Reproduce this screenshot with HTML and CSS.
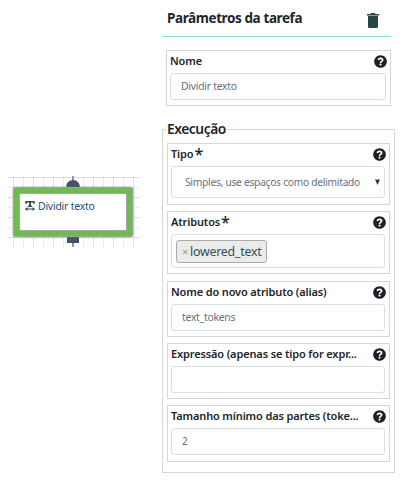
FILE: index.html
```html
<!DOCTYPE html>
<html lang="pt-BR">
<head>
<meta charset="utf-8">
<title>Parâmetros da tarefa</title>
<link rel="stylesheet" href="styles.css">
</head>
<body>
<svg class="defs" width="0" height="0">
  <symbol id="help" viewBox="0 0 512 512"><path fill="#1d2126" d="M504 256c0 137-111 248-248 248S8 393 8 256 119 8 256 8s248 111 248 248z"/><path fill="none" stroke="#fff" stroke-width="66" d="M166 197c14-42 43-65 88-65 50 0 86 27 86 68 0 53-80 50-80 102v10"/><circle cx="258" cy="378" r="43" fill="#fff"/></symbol>
</svg>
<main class="workspace">
  <section class="canvas">
    <svg class="ports" width="132" height="71" viewBox="0 0 132 71">
      <path d="M65 0v71" stroke="#8d949e" stroke-width="2"/>
      <circle cx="65" cy="11" r="7" fill="#445466"/>
      <path d="M59 61h12v6H59z" fill="#445466"/>
    </svg>
    <div class="node">
      <div class="node-body">
        <svg class="node-icon" width="10" height="10" viewBox="0 0 10 10" fill="#2d4a50"><path d="M.3 0h9.400v3H8.500L8.100 1.500H5.900v3.300h1.300V6H2.800V4.800h1.300V1.500H1.900L1.500 3H.3z"/><path d="M0 8l2.400-2v1.400h5.200V6L10 8l-2.400 2V8.600H2.400V10z"/></svg>
        <span>Dividir texto</span>
      </div>
    </div>
  </section>
  <section class="panel">
    <header class="panel-head">
      <h1>Parâmetros da tarefa</h1>
      <svg width="12" height="15" viewBox="0 0 12 15" fill="#2a4548"><path d="M0 1h3.500l.8-1h3.400l.8 1H12v1.400H0zM1 3h10v10.500q0 1.500-1.500 1.500h-7Q1 15 1 13.500z"/></svg>
    </header>
    <div class="field name">
      <div class="label"><span class="text">Nome</span><svg class="help"><use href="#help"/></svg></div>
      <div class="input">Dividir texto</div>
    </div>
    <fieldset>
      <legend>Execução</legend>
      <div class="field type">
        <div class="label"><span class="text">Tipo</span><span class="star">*</span><svg class="help"><use href="#help"/></svg></div>
        <div class="input select"><span>Simples, use espaços como delimitado</span><svg width="5" height="6" viewBox="0 0 5 6"><path d="M0 .5h5L2.500 6z" fill="#343a40"/></svg></div>
      </div>
      <div class="field attributes">
        <div class="label"><span class="text">Atributos</span><span class="star">*</span><svg class="help"><use href="#help"/></svg></div>
        <div class="input tags"><span class="tag"><span class="remove">×</span>lowered_text</span></div>
      </div>
      <div class="field alias">
        <div class="label"><span class="text">Nome do novo atributo (alias)</span><svg class="help"><use href="#help"/></svg></div>
        <div class="input">text_tokens</div>
      </div>
      <div class="field expression">
        <div class="label"><span class="text">Expressão (apenas se tipo for expr...</span><svg class="help"><use href="#help"/></svg></div>
        <div class="input"></div>
      </div>
      <div class="field size">
        <div class="label"><span class="text">Tamanho mínimo das partes (toke...</span><svg class="help"><use href="#help"/></svg></div>
        <div class="input">2</div>
      </div>
    </fieldset>
  </section>
</main>
</body>
</html>
```
FILE: styles.css
```css
* { box-sizing: border-box; }
body { margin: 0; background: #fff; color: #212529; font-family: "Noto Sans", sans-serif; font-size: 11px; }
.defs { position: absolute; }
.workspace { display: flex; height: 487px; overflow: hidden; }
.canvas {
  position: relative; width: 132px; height: 71px; margin: 176px 22px 0 8px;
  background:
    linear-gradient(90deg, #dcdcdf 1px, transparent 1px) 5px 0 / 20px 20px,
    linear-gradient(#dcdcdf 1px, transparent 1px) 0 1px / 20px 20px,
    linear-gradient(90deg, #ececee 1px, transparent 1px) 15px 0 / 20px 20px,
    linear-gradient(#ececee 1px, transparent 1px) 0 11px / 20px 20px;
}
.ports { display: block; }
.node {
  position: absolute; left: 5px; top: 11px; width: 120px; height: 50px; padding: 5px;
  background: #70b953; border: 1px solid #9caa98; border-radius: 3px; box-shadow: 0 0 2px #777;
}
.node-body {
  display: flex; gap: 3px; height: 38px; padding: 7px 5px; background: #fff;
  border: 1px solid #a5a5a5; border-radius: 2px; color: #245078;
  font-size: 10.500px; line-height: 11px; letter-spacing: -.25px; white-space: nowrap;
}
.panel { width: 233px; }
.panel-head {
  display: flex; justify-content: space-between; align-items: center;
  width: 229px; height: 37px; padding: 5px 12px 0 5px; border-bottom: 1px solid #8de0b8;
}
h1 { margin: -5px 0 0; font-size: 13.500px; line-height: 18px; font-weight: 700; letter-spacing: -.4px; white-space: nowrap; }
.field { border: 1px solid #d6d6d8; padding: 0 4px 0 3px; }
.name { width: 225px; height: 56px; margin: 13px 0 0 4px; }
.label { display: flex; align-items: center; height: 22px; font-weight: 600; font-size: 11px; letter-spacing: -.14px; white-space: nowrap; }
.text { margin-top: -3px; }
.star { align-self: flex-start; font-size: 16px; font-weight: 500; line-height: 20px; margin-left: 1px; }
.help { width: 13px; height: 13px; margin: -1px -1px 0 auto; }
.input {
  display: flex; align-items: center; height: 27px; padding: 0 10px 1px; color: #66707a;
  border: 1px solid #d8dfe6; border-radius: 3px; font-size: 10.300px; letter-spacing: -.22px; white-space: nowrap;
}
fieldset { width: 233px; height: 353px; margin: 14px 0 0; padding: 5px 4px 0; border: 1px solid #d6d6d8; min-width: 0; }
legend { padding: 0 1px; margin-left: -1px; font-size: 13.800px; line-height: 18px; font-weight: 600; letter-spacing: -.45px; }
.type { height: 62px; }
.select { height: 32px; padding: 0 4px 0 13px; justify-content: space-between; font-size: 10.200px; letter-spacing: -.25px; }
.attributes { height: 63px; margin-top: 6px; }
.tags { height: 34px; padding: 0 4px; }
.tag { display: flex; align-items: center; height: 23px; padding: 0 5px; background: #ebebeb; border: 1px solid #aaa; border-radius: 3px; color: #345052; font-size: 12.400px; letter-spacing: -.25px; }
.remove { color: #999; font-size: 11px; margin-right: 2px; }
.alias { height: 56px; margin-top: 7px; }
.expression { height: 56px; margin-top: 6px; }
.size { height: 57px; margin-top: 6px; }
```
